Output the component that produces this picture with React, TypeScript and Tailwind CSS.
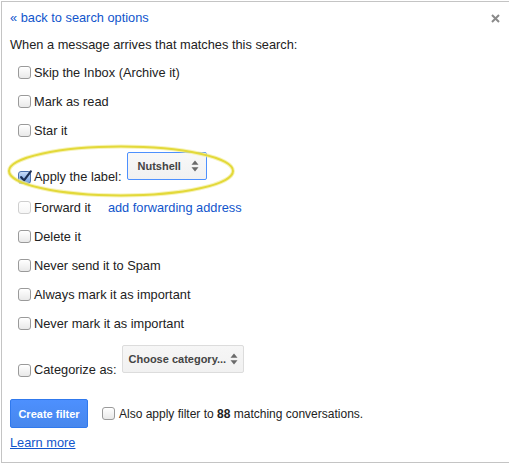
import React from "react";

function Box({ checked, disabled }: { checked?: boolean; disabled?: boolean }) {
  if (checked) {
    return (
      <span className="relative inline-block w-[13px] h-[13px] shrink-0 rounded-[3px] border border-[#4a6fae] bg-gradient-to-b from-[#c8dcf8] to-[#6f9de3]">
        <svg className="absolute left-[0px] top-[-2px]" width="13" height="13" viewBox="0 0 13 13">
          <path d="M2.2 7.2 L5 10.4 L11.8 1.4" fill="none" stroke="#1c2f55" strokeWidth="2.2" strokeLinecap="round" strokeLinejoin="round" />
        </svg>
      </span>
    );
  }
  return (
    <span
      className={
        disabled
          ? "inline-block w-[13px] h-[13px] shrink-0 rounded-[3px] border border-[#cfcfcf] bg-gradient-to-b from-white to-[#f6f6f6]"
          : "inline-block w-[13px] h-[13px] shrink-0 rounded-[3px] border border-[#9a9a9a] bg-gradient-to-b from-white to-[#e9e9e9] shadow-[inset_0_1px_0_#fff]"
      }
    />
  );
}

function Arrows() {
  return (
    <svg width="8" height="12" viewBox="0 0 8 12">
      <path d="M4 0.5 L7.5 4.8 L0.5 4.8 Z" fill="#6a6a6a" />
      <path d="M4 11.5 L7.5 7.2 L0.5 7.2 Z" fill="#6a6a6a" />
    </svg>
  );
}

function Row({ children }: { children: React.ReactNode }) {
  return <div className="flex items-center h-[29px] pl-[8px]">{children}</div>;
}

export default function App() {
  return (
    <div className="w-[509px] h-[463px] bg-white pt-[1px] pl-[1px] overflow-hidden" style={{ fontFamily: '"Liberation Sans", Arial, sans-serif' }}>
      <div className="relative h-[462px] border-t border-l border-b border-[#c4c4c4] text-[12.8px] text-[#222] leading-[16px]">
        <div className="pl-[8px]">
          <div className="flex items-center justify-between h-[32px] pr-[9px]">
            <a className="text-[#15c] cursor-pointer">« back to search options</a>
            <svg width="9" height="9" viewBox="0 0 9 9">
              <path d="M1 1 L8 8 M8 1 L1 8" stroke="#8a8a8a" strokeWidth="2" />
            </svg>
          </div>
          <div className="flex items-center h-[21px]">When a message arrives that matches this search:</div>
          <div className="mt-[3px]">
            <Row>
              <Box />
              <span className="ml-[3px]">Skip the Inbox (Archive it)</span>
            </Row>
            <Row>
              <Box />
              <span className="ml-[3px]">Mark as read</span>
            </Row>
            <Row>
              <Box />
              <span className="ml-[3px]">Star it</span>
            </Row>
            <div className="flex items-start h-[48px] pl-[8px]">
              <div className="flex items-center h-[16px] mt-[24px]">
                <Box checked />
                <span className="ml-[3px]">Apply the label:</span>
              </div>
              <div className="mt-[7px] ml-[5px] w-[80px] h-[28px] rounded-[2px] border border-[#4d90fe] bg-gradient-to-b from-[#f8f8f8] to-[#f1f1f1] flex items-center pl-[10px] pr-[7px] justify-between">
                <span className="text-[11px] font-bold text-[#444]">Nutshell</span>
                <Arrows />
              </div>
            </div>
            <Row>
              <Box disabled />
              <span className="ml-[3px]">Forward it</span>
              <a className="ml-[17px] text-[#15c] cursor-pointer">add forwarding address</a>
            </Row>
            <Row>
              <Box />
              <span className="ml-[3px]">Delete it</span>
            </Row>
            <Row>
              <Box />
              <span className="ml-[3px]">Never send it to Spam</span>
            </Row>
            <Row>
              <Box />
              <span className="ml-[3px]">Always mark it as important</span>
            </Row>
            <Row>
              <Box />
              <span className="ml-[3px]">Never mark it as important</span>
            </Row>
            <div className="flex items-start h-[48px] pl-[8px]">
              <div className="flex items-center h-[16px] mt-[24px]">
                <Box />
                <span className="ml-[3px]">Categorize as:</span>
              </div>
              <div className="mt-[7px] ml-[5px] w-[122px] h-[28px] rounded-[2px] border border-[#dcdcdc] bg-gradient-to-b from-[#f6f6f6] to-[#f1f1f1] flex items-center pl-[6px] pr-[5px] justify-between">
                <span className="text-[11px] font-bold text-[#444]">Choose category...</span>
                <Arrows />
              </div>
            </div>
          </div>
          <div className="flex items-center mt-[13px]">
            <div className="w-[78px] h-[29px] rounded-[2px] border border-[#3079ed] bg-gradient-to-b from-[#4d90fe] to-[#4787ed] flex items-center justify-center text-[11px] font-bold text-white">
              Create filter
            </div>
            <div className="ml-[14px] flex items-center">
              <Box />
              <span className="ml-[4px] text-[12px]">
                Also apply filter to <b>88</b> matching conversations.
              </span>
            </div>
          </div>
          <div className="mt-[7px]">
            <a className="text-[#15c] underline cursor-pointer">Learn more</a>
          </div>
        </div>
        <svg className="absolute left-[3px] top-[141px] pointer-events-none" width="234" height="56" viewBox="0 0 234 56">
          <ellipse cx="116" cy="28" rx="112" ry="24.5" fill="none" stroke="#f3ee9a" strokeWidth="4" opacity="0.7" />
          <ellipse cx="116" cy="28" rx="112" ry="24.5" fill="none" stroke="#e3d93a" strokeWidth="2" />
        </svg>
      </div>
    </div>
  );
}
